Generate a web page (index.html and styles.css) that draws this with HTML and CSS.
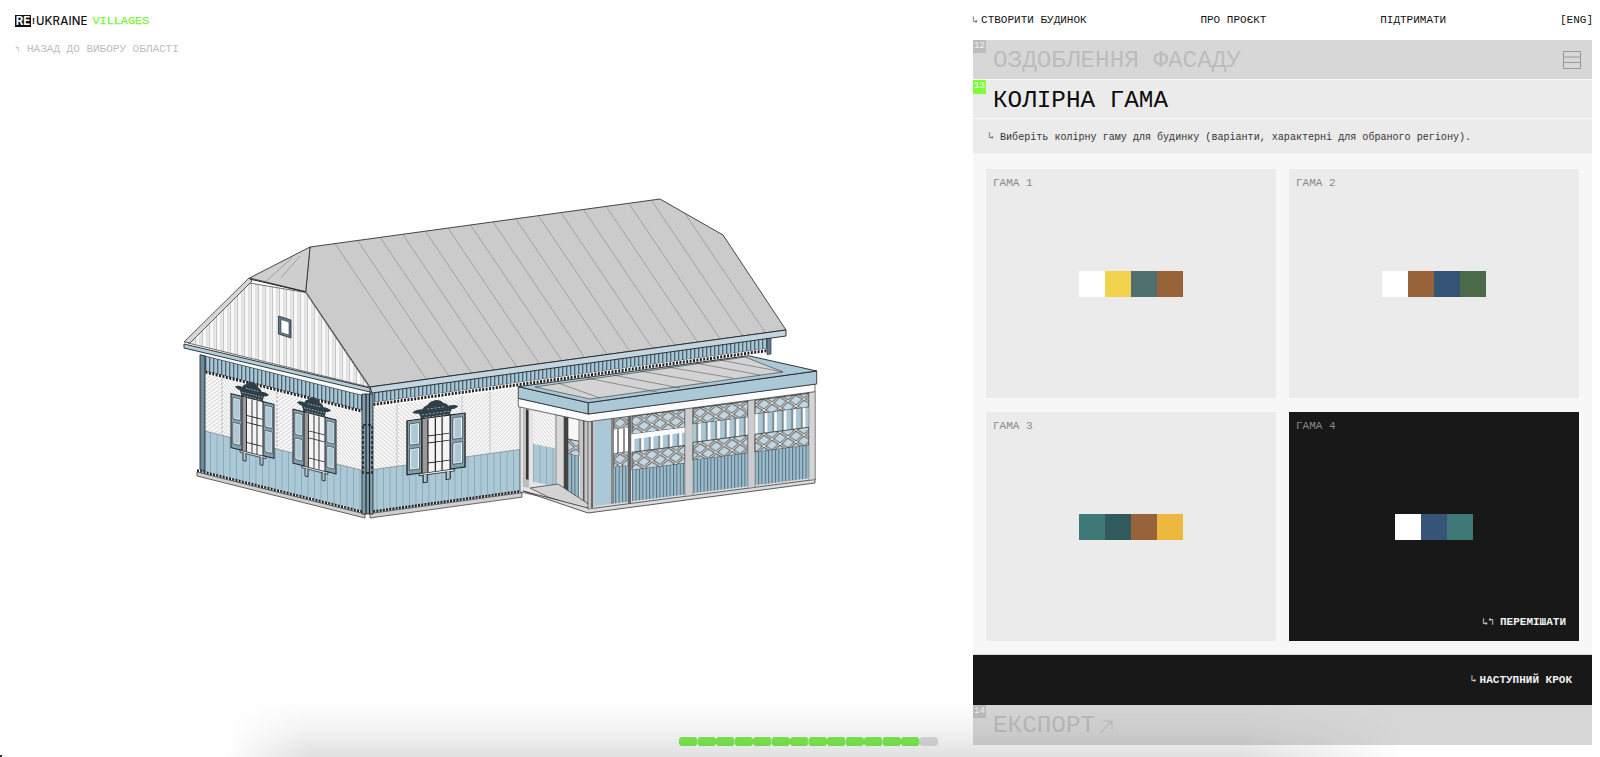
FILE: index.html
```html
<!DOCTYPE html>
<html lang="uk">
<head>
<meta charset="utf-8">
<title>Re:Ukraine Villages</title>
<link rel="stylesheet" href="styles.css">
</head>
<body>
<div class="page">
  <section class="viewer">
    <header class="viewer-head">
      <div class="logo"><span class="logo-re">RE</span><span class="logo-mark">!</span><span class="logo-ukr">UKRAINE</span><span class="logo-vil">VILLAGES</span></div>
      <a class="back"><span class="back-arrow">↰</span>НАЗАД ДО ВИБОРУ ОБЛАСТІ</a>
    </header>
    <svg class="house" viewBox="170 185 660 340" width="660" height="340" xmlns="http://www.w3.org/2000/svg">
      <defs>
        <pattern id="pStripe" width="4" height="8" patternUnits="userSpaceOnUse"><rect width="4" height="8" fill="#a9c6d4"/><rect width="1.2" height="8" fill="#46606c"/></pattern>
        <pattern id="pBoards" width="6.5" height="8" patternUnits="userSpaceOnUse"><rect width="6.5" height="8" fill="#abc8d6"/><rect width=".6" height="8" fill="#7c99a7"/></pattern>
        <pattern id="pDark" width="3.4" height="8" patternUnits="userSpaceOnUse"><rect width="3.4" height="8" fill="#9dbccb"/><rect width="1" height="8" fill="#52707e"/></pattern>
        <pattern id="pGable" width="7" height="8" patternUnits="userSpaceOnUse"><rect width="7" height="8" fill="#f8f8f8"/><rect x="3" width="2.6" height="8" fill="#e2e2e2"/><rect x="6" width=".6" height="8" fill="#a5a5a5"/></pattern>
        <pattern id="pHatchL" width="4" height="4" patternUnits="userSpaceOnUse"><rect width="4" height="4" fill="#fbfbfb"/><path d="M-1 5L5 -1" stroke="#999" stroke-width=".5"/></pattern>
        <pattern id="pHatchR" width="4" height="4" patternUnits="userSpaceOnUse"><rect width="4" height="4" fill="#fbfbfb"/><path d="M-1 -1L5 5" stroke="#999" stroke-width=".5"/></pattern>
        <pattern id="pLattice" width="16" height="12" patternUnits="userSpaceOnUse"><rect width="16" height="12" fill="#c3d5de"/><path d="M0 0L16 12M16 0L0 12" stroke="#333" stroke-width="2.6"/><path d="M0 0L16 12M16 0L0 12" stroke="#ededed" stroke-width="1.1"/></pattern>
        <pattern id="pVent" width="9.5" height="18" patternUnits="userSpaceOnUse"><rect width="9.5" height="18" fill="#a9c6d4"/><rect x="5" width="3.4" height="18" fill="#fafafa"/><rect x="4.4" width=".8" height="18" fill="#222"/></pattern>
        <clipPath id="roofClip"><path d="M310 247L660 199L723 235L786 330L370 387L305.7 291.7Z"/></clipPath>
        <g id="win">
          <path d="M21.5 -17c-3 0-5 1.5-6.5 4-2 .5-3 2-3.5 3.5-3-.5-5.5 0-7.5 1.5 1 1.5 3 2.5 5 2.5l1.5 5.5h21l1.5-5.5c2 0 4-1 5-2.5-2-1.5-4.5-2-7.5-1.5-.5-1.5-1.5-3-3.5-3.5-1.5-2.5-3.5-4-6.5-4z" fill="#2f3f48"/>
          <path d="M15 -9h13M11 -4h21M13 -1h17" stroke="#a9c6d4" stroke-width=".8" stroke-dasharray="1.5 1.2"/>
          <rect x="11" y="0" width="22" height="55" fill="#f4f4f4" stroke="#222"/>
          <rect x="11.5" y="0.5" width="4" height="54" fill="#999"/>
          <path d="M15.5 1v53M26 1v53M21 1v53M15.5 18h16M15.5 25h16M15.5 45h16" stroke="#222" stroke-width=".9" fill="none"/>
          <rect x="0" y="0" width="11" height="54" fill="#7f9fae" stroke="#222"/>
          <rect x="2.6" y="4" width="6" height="20" fill="#abc8d6" stroke="#fff" stroke-width="1"/>
          <rect x="2.6" y="29" width="6" height="20" fill="#abc8d6" stroke="#fff" stroke-width="1"/>
          <rect x="2" y="3.4" width="7.2" height="21.2" fill="none" stroke="#222" stroke-width=".5"/>
          <rect x="2" y="28.4" width="7.2" height="21.2" fill="none" stroke="#222" stroke-width=".5"/>
          <rect x="32" y="0" width="11" height="54" fill="#7f9fae" stroke="#222"/>
          <rect x="34.6" y="4" width="6" height="20" fill="#abc8d6" stroke="#fff" stroke-width="1"/>
          <rect x="34.6" y="29" width="6" height="20" fill="#abc8d6" stroke="#fff" stroke-width="1"/>
          <rect x="34" y="3.4" width="7.2" height="21.2" fill="none" stroke="#222" stroke-width=".5"/>
          <rect x="34" y="28.4" width="7.2" height="21.2" fill="none" stroke="#222" stroke-width=".5"/>
          <rect x="9" y="54.5" width="26" height="2" fill="#dfe7eb" stroke="#222" stroke-width=".7"/>
          <path d="M12 56v8h3v-8M29 56v8h3v-8" fill="#abc8d6" stroke="#222" stroke-width=".8"/>
        </g>
      </defs>

      <!-- right wall -->
      <g transform="matrix(1 -.137 0 1 370 392)">
        <rect x="0" y="0" width="150" height="17" fill="#fff"/>
        <rect x="0" y="0" width="400" height="11" fill="url(#pStripe)" stroke="#223" stroke-width=".6"/>
        <rect x="0" y="11" width="400" height="6" fill="#fff"/>
        <path d="M0 13H400" stroke="#222" stroke-width="3" stroke-dasharray="2 1.4"/>
        <rect x="0" y="16" width="92" height="62" fill="url(#pHatchR)"/>
        <rect x="92" y="16" width="60" height="62" fill="url(#pHatchL)"/>
        <path d="M27 16v62M92 16v62M120 16v62" stroke="#999" stroke-width=".6" stroke-dasharray="3 1"/>
        <rect x="0" y="78" width="152" height="42" fill="url(#pBoards)"/>
        <path d="M0 78H152" stroke="#777" stroke-width=".6"/>
        <path d="M0 120H152" stroke="#222" stroke-width="2.6" stroke-dasharray="2 1.2"/>
        <path d="M0 121.5H152V126H0Z" fill="#cfcfcf" stroke="#333" stroke-width=".7"/>
        <use href="#win" transform="translate(37 34) scale(1.35 1)"/>
        <rect x="397" y="0" width="4" height="17" fill="#5f7f8e" stroke="#223" stroke-width=".6"/>
      </g>

      <!-- main roof -->
      <path d="M310 247L660 199L723 235L786 330L370 387L305.7 291.7Z" fill="#cbcbcb" stroke="#333" stroke-width=".9"/>
      <g clip-path="url(#roofClip)">
        <path d="M335 243.6l91.4 135.7M357.6 240.5l91.4 135.7M380.2 237.4l91.4 135.7M402.8 234.3l91.4 135.7M425.4 231.2l91.4 135.7M448 228.1l91.4 135.7M470.6 225l91.4 135.7M493.2 221.9l91.4 135.7M515.8 218.8l91.4 135.7M538.4 215.7l91.4 135.7M561 212.6l91.4 135.7M583.6 209.5l91.4 135.7M606.2 206.4l91.4 135.7M628.8 203.3l91.4 135.7M651.4 200.2l91.4 135.7M674 197.1l91.4 135.7M696.6 194l91.4 135.7M719.2 190.9l91.4 135.7" stroke="#666" stroke-width=".4" fill="none"/>
      </g>
      <path d="M370 387L786 330V336L372 393Z" fill="#c3d6df" stroke="#222" stroke-width=".9"/>
      <!-- hip -->
      <path d="M249.5 278L310 247L305.7 291.7Z" fill="#cfcfcf" stroke="#333" stroke-width=".9"/>
      <path d="M281 278L300 256M265 282L292 258" stroke="#666" stroke-width=".45"/>
      <path d="M249.5 279L305.7 292" stroke="#222" stroke-width="1.1"/>

      <!-- gable -->
      <path d="M188 343L249.5 283L305.7 292.5L369 387Z" fill="url(#pGable)" stroke="#333" stroke-width=".7"/>
      <path d="M184 342L249 278L252 281L190 343Z" fill="#d6d6d6" stroke="#333" stroke-width=".8"/>
      <path d="M184 344L370 388V392L184 348Z" fill="#b3cedb" stroke="#222" stroke-width=".9"/>
      <path d="M278.5 316L291 320V338L278.5 334Z" fill="#5d7c8b" stroke="#222" stroke-width=".7"/>
      <path d="M281 319.5L289 322V335L281 332.5Z" fill="#fff" stroke="#222" stroke-width=".5"/>

      <!-- left wall -->
      <g transform="matrix(1 .25 0 1 197 354)">
        <rect x="5" y="0" width="160" height="15" fill="url(#pStripe)" stroke="#223" stroke-width=".6"/>
        <rect x="5" y="15" width="160" height="60" fill="#fff"/>
        <path d="M5 16H165" stroke="#222" stroke-width="3" stroke-dasharray="2 1.4"/>
        <rect x="5" y="18" width="20" height="57" fill="url(#pHatchL)"/>
        <rect x="25" y="18" width="55" height="57" fill="url(#pHatchR)"/>
        <rect x="80" y="18" width="45" height="57" fill="url(#pHatchL)"/>
        <rect x="125" y="18" width="40" height="57" fill="url(#pHatchR)"/>
        <path d="M25 18v57M80 18v57M125 18v57" stroke="#999" stroke-width=".6" stroke-dasharray="3 1"/>
        <rect x="5" y="75" width="160" height="41" fill="url(#pBoards)"/>
        <path d="M5 75H165" stroke="#777" stroke-width=".6"/>
        <path d="M0 116.5H168" stroke="#222" stroke-width="2.6" stroke-dasharray="2 1.2"/>
        <path d="M0 118H168V122H0Z" fill="#cfcfcf" stroke="#333" stroke-width=".7"/>
        <rect x="3" y="0" width="5" height="115" fill="#6b8b9a" stroke="#222" stroke-width=".8"/>
        <use href="#win" transform="translate(34 31)"/>
        <use href="#win" transform="translate(96 31)"/>
      </g>

      <!-- corner post -->
      <path d="M362 394H373V514H362Z" fill="#7f9fae" stroke="#222" stroke-width=".8"/>
      <path d="M366 394V514M369.5 394V514" stroke="#222" stroke-width="1.2"/>
      <path d="M363 425h9v48h-9z" fill="none" stroke="#222" stroke-width="1.6" stroke-dasharray="3 2"/>

      <!-- porch: left side -->
      <g transform="matrix(1 .21 0 1 520 406)">
        <rect x="0" y="0" width="68" height="86" fill="#e4e4e4" stroke="#333" stroke-width=".6"/>
        <rect x="13" y="2" width="22" height="33" fill="url(#pHatchR)"/>
        <rect x="13" y="35" width="22" height="38" fill="url(#pBoards)"/>
        <rect x="3" y="2" width="6" height="78" fill="#bdbdbd"/>
        <rect x="6" y="2" width="2.5" height="70" fill="#333"/>
        <rect x="36" y="1" width="8" height="78" fill="#d8d8d8" stroke="#333" stroke-width=".5"/>
        <rect x="44" y="1" width="4" height="80" fill="#444"/>
        <rect x="48" y="1" width="11" height="22" fill="#f7f7f7" stroke="#333" stroke-width=".6"/>
        <rect x="48" y="23" width="11" height="15" fill="url(#pLattice)" stroke="#333" stroke-width=".6"/>
        <rect x="48" y="38" width="11" height="42" fill="url(#pDark)"/>
        <rect x="60" y="0" width="8" height="86" fill="#c6c6c6"/>
        <rect x="63" y="0" width="1.5" height="86" fill="#555"/>
      </g>

      <!-- porch: floor and plinth -->
      <path d="M530 488L558 484L590 505V510L548 497Z" fill="#d3d3d3" stroke="#333" stroke-width=".7"/>
      <path d="M523 491L588 513L815 483V478L590 507L588 508Z" fill="#dcdcdc" stroke="#333" stroke-width=".8"/>

      <!-- porch: front -->
      <g transform="matrix(1 -.13 0 1 588 421)">
        <rect x="0" y="0" width="227" height="88" fill="#dcdcdc" stroke="#333" stroke-width=".7"/>
        <rect x="1" y="0" width="6" height="88" fill="#c7c7c7"/>
        <rect x="3" y="0" width="2" height="88" fill="#666"/>
        <rect x="7" y="0" width="16" height="86" fill="#abc8d6"/>
        <rect x="23" y="0" width="3" height="86" fill="#888"/>
        <rect x="26" y="0" width="14" height="12" fill="url(#pLattice)" stroke="#333" stroke-width=".5"/>
        <rect x="26" y="12" width="14" height="24" fill="#fff"/>
        <path d="M30 12v24M36 12v24" stroke="#222"/>
        <rect x="26" y="36" width="14" height="14" fill="url(#pLattice)" stroke="#333" stroke-width=".5"/>
        <rect x="26" y="50" width="14" height="36" fill="url(#pDark)"/>
        <rect x="40" y="0" width="3" height="88" fill="#666"/>
        <g>
          <rect x="44" y="1" width="53" height="18" fill="url(#pLattice)" stroke="#222" stroke-width=".7"/>
          <rect x="44" y="19" width="53" height="18" fill="url(#pVent)"/>
          <rect x="44" y="19" width="53" height="5" fill="#fbfbfb"/>
          <rect x="44" y="37" width="53" height="18" fill="url(#pLattice)" stroke="#222" stroke-width=".7"/>
          <rect x="44" y="55" width="53" height="31" fill="url(#pDark)"/>
        </g>
        <rect x="97" y="0" width="8" height="88" fill="#cdcdcd" stroke="#555" stroke-width=".4"/>
        <g>
          <rect x="105" y="1" width="55" height="16" fill="url(#pLattice)" stroke="#222" stroke-width=".7"/>
          <rect x="105" y="17" width="55" height="18" fill="url(#pVent)"/>
          <rect x="105" y="35" width="55" height="18" fill="url(#pLattice)" stroke="#222" stroke-width=".7"/>
          <rect x="105" y="53" width="55" height="33" fill="url(#pDark)"/>
        </g>
        <rect x="160" y="0" width="7" height="88" fill="#cdcdcd" stroke="#555" stroke-width=".4"/>
        <g>
          <rect x="167" y="1" width="54" height="14" fill="url(#pLattice)" stroke="#222" stroke-width=".7"/>
          <rect x="167" y="15" width="54" height="20" fill="url(#pVent)"/>
          <rect x="167" y="35" width="54" height="18" fill="url(#pLattice)" stroke="#222" stroke-width=".7"/>
          <rect x="167" y="53" width="54" height="33" fill="url(#pDark)"/>
        </g>
        <rect x="221" y="0" width="6" height="88" fill="#d5d5d5" stroke="#555" stroke-width=".4"/>
      </g>

      <!-- porch: roof -->
      <path d="M518.3 398.3V406.7L588.3 421.7L815 391.7V384L588.3 414Z" fill="#fbfbfb" stroke="#333" stroke-width=".7"/>
      <path d="M518.3 386.7V398.3L588.3 414V402.7Z" fill="#abc8d6" stroke="#222" stroke-width=".8"/>
      <path d="M588.3 402.7V414L816.7 384V371Z" fill="#abc8d6" stroke="#222" stroke-width=".8"/>
      <path d="M518.3 386.7L588.3 402.7L816.7 371L748.3 355.7Z" fill="#abc8d6" stroke="#222" stroke-width=".9"/>
      <path d="M535 387L590 399L783 372L745 357Z" fill="#d3d3d3" stroke="#333" stroke-width=".6"/>
      <path d="M558 383L600 398M587 378L657 392M613 375L680 388M640 371L708 383M667 367L733 378M695 363L760 375M720 360L783 372" stroke="#444" stroke-width=".5"/>
    </svg>
  </section>

  <aside class="panel">
    <nav class="nav">
      <a class="nav-link"><span class="arrow">↳</span>СТВОРИТИ БУДИНОК</a>
      <a class="nav-link">ПРО ПРОЄКТ</a>
      <a class="nav-link">ПІДТРИМАТИ</a>
      <a class="nav-link">[ENG]</a>
    </nav>
    <div class="step step-off">
      <span class="badge">12</span>
      <h2 class="step-title">ОЗДОБЛЕННЯ ФАСАДУ</h2>
      <svg class="step-icon" viewBox="0 0 18 18" width="18" height="18"><path d="M.5.5h17v17H.5zM.5 6h17M.5 11.5h17" fill="none" stroke="#9a9a9a"/></svg>
    </div>
    <div class="step step-on">
      <span class="badge badge-on">13</span>
      <h2 class="step-title">КОЛІРНА ГАМА</h2>
    </div>
    <p class="hint"><span class="arrow">↳</span>Виберіть колірну гаму для будинку (варіанти, характерні для обраного регіону).</p>
    <div class="cards">
      <article class="card">
        <span class="card-label">ГАМА 1</span>
        <div class="swatches"><i class="c-white"></i><i class="c-yellow"></i><i class="c-slate"></i><i class="c-brown"></i></div>
      </article>
      <article class="card">
        <span class="card-label">ГАМА 2</span>
        <div class="swatches"><i class="c-white"></i><i class="c-brown"></i><i class="c-blue"></i><i class="c-green"></i></div>
      </article>
      <article class="card">
        <span class="card-label">ГАМА 3</span>
        <div class="swatches"><i class="c-teal"></i><i class="c-deep"></i><i class="c-brown"></i><i class="c-amber"></i></div>
      </article>
      <article class="card card-active">
        <span class="card-label">ГАМА 4</span>
        <div class="swatches"><i class="c-white"></i><i class="c-blue"></i><i class="c-teal"></i></div>
        <a class="shuffle"><span class="arrow">↳↰</span>ПЕРЕМІШАТИ</a>
      </article>
    </div>
    <a class="next"><span class="arrow">↳</span>НАСТУПНИЙ КРОК</a>
    <div class="step step-off step-export">
      <span class="badge">14</span>
      <h2 class="step-title">ЕКСПОРТ</h2>
      <svg class="export-arrow" viewBox="0 0 14 14" width="14" height="14"><path d="M1 13L13 1M4 1h9v9" fill="none" stroke="#bdbdbd" stroke-width="1.1"/></svg>
    </div>
  </aside>
</div>

<div class="progress">
  <i class="seg"></i><i class="seg"></i><i class="seg"></i><i class="seg"></i><i class="seg"></i><i class="seg"></i><i class="seg"></i><i class="seg"></i><i class="seg"></i><i class="seg"></i><i class="seg"></i><i class="seg"></i><i class="seg"></i><i class="seg seg-off"></i>
</div>
<div class="dock-shadow"></div>
<div class="corner-dot"></div>
</body>
</html>
```
FILE: styles.css
```css
* { box-sizing: border-box; }
html, body { margin: 0; height: 100%; }
body {
  background: #fff;
  overflow: hidden;
  font-family: "Liberation Mono", "DejaVu Sans Mono", monospace;
  color: #111;
}
a { color: inherit; text-decoration: none; }
.page { display: flex; width: 1600px; height: 757px; }

.viewer { width: 973px; flex: none; height: 757px; overflow: hidden; }
.viewer-head { height: 60px; padding: 15px 0 0 15px; }
.logo { display: flex; align-items: center; height: 12px; font-size: 11.5px; }
.logo-re {
  background: #111; color: #fff; font: 700 11.5px/12px "Inter", "Liberation Sans", sans-serif;
  width: 16px; height: 12px; text-align: center;
}
.logo-mark { font: 700 9px/12px "Liberation Sans", sans-serif; width: 5px; text-align: center; }
.logo-ukr { font: 500 11.5px/12px "Inter", "Liberation Sans", sans-serif; letter-spacing: .1px; }
.logo-vil { color: #79f531; margin-left: 5px; font-size: 11.8px; -webkit-text-stroke: .25px #79f531; }
.back { display: block; margin-top: 16px; font-size: 11px; line-height: 13px; color: #bdbdbd; }
.back-arrow { display: inline-block; width: 12px; font-size: 8px; }
.house { display: block; margin: 125px 0 0 170px; }

.panel { width: 627px; height: 757px; flex: none; padding-right: 8px; display: flex; flex-direction: column; }
.nav {
  height: 40px; flex: none; display: flex; justify-content: space-between; align-items: center;
  margin-right: -1px; margin-left: -1px; font-size: 11px; color: #111;
}
.arrow { display: inline-block; font-size: 10px; line-height: 1; margin-right: 3px; color: #666; }
.step { position: relative; height: 40px; flex: none; display: flex; align-items: center; padding: 0 11px 0 20px; }
.step-off { background: #d7d7d7; color: #bcbcbc; height: 39px; }
.step-on { background: #ebebeb; color: #0c0c0c; border-top: 1px solid #fafafa; border-bottom: 1px solid #f6f6f6; }
.step-title { margin: 0; font-size: 24.3px; font-weight: 400; line-height: 30px; padding-top: 2px; }
.step-on .step-title { padding-top: 4px; }
.badge {
  position: absolute; left: 0; top: 0; width: 13px; height: 13px;
  background: #bdbdbd; color: #eee; font-size: 9px; line-height: 13px; text-align: center;
}
.badge-on { background: #7dff3b; color: #fff; height: 14px; }
.step-icon { margin-left: auto; }
.export-arrow { margin: 3px 0 0 4px; }

.hint {
  margin: 0; height: 35px; flex: none; background: #ebebeb; padding: 2px 0 0 15px; display: flex; align-items: center;
  font-size: 10.07px; color: #333; border-bottom: 1px solid #f3f3f3;
}
.hint .arrow { margin-right: 6px; }
.cards {
  flex: none; background: #f7f7f7; padding: 15px 13px 13px; display: grid;
  grid-template-columns: 1fr 1fr; grid-template-rows: 229px 229px; gap: 14px 13px;
}
.card { position: relative; background: #ebebeb; display: flex; align-items: center; justify-content: center; }
.card-label { position: absolute; left: 7px; top: 7px; font-size: 11px; line-height: 14px; color: #8a8a8a; }
.card-active { background: #181818; }
.swatches { display: flex; }
.swatches i { display: block; width: 26px; height: 26px; }
.c-white { background: #fff; }
.c-yellow { background: #f1d34d; }
.c-slate { background: #50706f; }
.c-brown { background: #986338; }
.c-blue { background: #365475; }
.c-green { background: #4a6a4a; }
.c-teal { background: #3e7977; }
.c-deep { background: #305a5e; }
.c-amber { background: #eeb83f; }
.shuffle {
  position: absolute; right: 13px; bottom: 12px; font-size: 11px; line-height: 14px; font-weight: 700; color: #f2f2f2;
}
.shuffle .arrow, .next .arrow { color: #ddd; font-weight: 400; }
.shuffle .arrow { margin-right: 6px; letter-spacing: 0; }
.next {
  height: 51px; flex: none; background: #181818; color: #f2f2f2; display: flex; align-items: center; justify-content: flex-end;
  padding-right: 20px; font-size: 11px; font-weight: 700; border-top: 1px solid #d6d6d6;
}
.step-export { height: 40px; padding-right: 0; }

.progress {
  position: absolute; left: 679px; top: 737px; display: flex; width: 259px;
}
.seg {
  display: block; width: 18.5px; height: 9px; background: #7fef52;
  clip-path: polygon(2px 0, calc(100% - 2px) 0, 100% 2px, 100% calc(100% - 2px), calc(100% - 2px) 100%, 2px 100%, 0 calc(100% - 2px), 0 2px);
}
.seg-off { background: #dedede; }
.dock-shadow {
  position: absolute; left: 225px; width: 1180px; top: 700px; height: 57px; pointer-events: none;
  background: linear-gradient(to top, rgba(0, 0, 0, .12), rgba(0, 0, 0, .05) 45%, rgba(0, 0, 0, 0));
  -webkit-mask-image: linear-gradient(to right, transparent, #000 7%, #000 86%, transparent);
  mask-image: linear-gradient(to right, transparent, #000 7%, #000 86%, transparent);
}
.corner-dot { position: absolute; left: 0; top: 755px; width: 2px; height: 2px; background: #333; }
```
